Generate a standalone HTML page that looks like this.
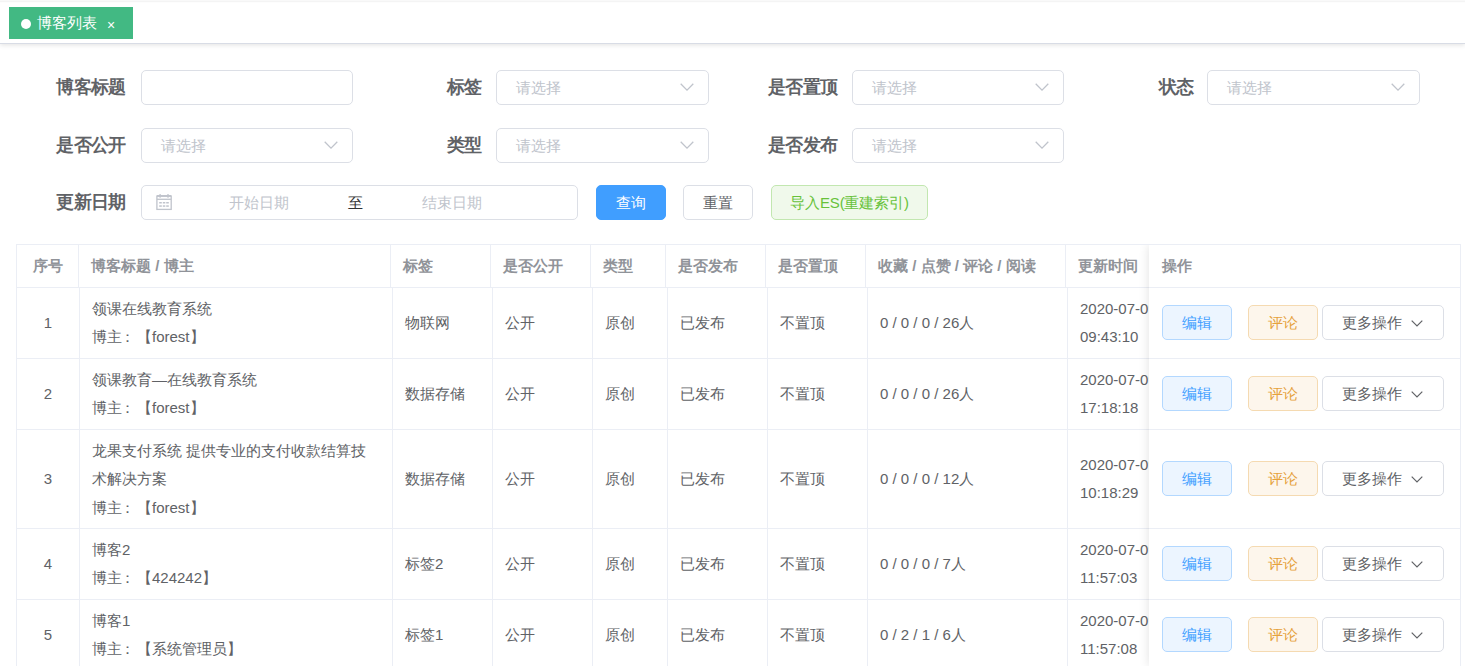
<!DOCTYPE html><html><head><meta charset="utf-8"><style>
*{box-sizing:border-box;margin:0;padding:0}
html,body{width:1465px;height:666px;overflow:hidden;background:#fff}
body{position:relative;font-family:"Liberation Sans",sans-serif;color:#606266}
.a{position:absolute;white-space:nowrap}
.topline{left:0;top:0;width:1465px;height:3px;background:linear-gradient(#f9f9f9 0,#f9f9f9 1px,#f4f4f4 1px,#f4f4f4 2px,#fdfdfd 2px)}
.tagsbar{left:0;top:2px;width:1465px;height:42px;background:#fff;border-bottom:1px solid #d8dce5;box-shadow:0 1px 5px 0 rgba(0,0,0,.12);clip-path:inset(1px 0 -20px 0)}
.tag{left:9px;top:7px;width:124px;height:32px;background:#42b983;color:#fff;font-size:15px;line-height:32px}
.tag .dot{position:absolute;left:12px;top:12px;width:10px;height:10px;border-radius:50%;background:#fff}
.tag .t{position:absolute;left:28px;top:0}
.tag .x{position:absolute;left:98px;top:2px;font-size:14px}
.lbl{font-size:17.5px;letter-spacing:-0.7px;font-weight:bold;color:#606266;line-height:35px;text-align:right}
.inp{height:35px;border:1px solid #dcdfe6;border-radius:5px;background:#fff}
.ph{position:absolute;left:19px;top:0;line-height:33px;font-size:15px;color:#c0c4cc;white-space:nowrap}
.arr{position:absolute;right:14px;top:12px;width:14px;height:8px}
.btn{height:35px;border-radius:5px;font-size:15px;line-height:33px;text-align:center;white-space:nowrap}
.c{font-size:15px;line-height:20px;color:#606266}
.h{font-size:15px;line-height:20px;color:#909399;font-weight:bold}
.vl{position:absolute;width:1px;background:#ebeef5}
.hl{position:absolute;height:1px;background:#ebeef5}
.fixed{left:1149px;top:245px;width:311px;height:421px;background:#fff;box-shadow:0 0 10px rgba(0,0,0,.12);clip-path:inset(0 0 0 -20px)}
</style></head><body>
<div class="a topline"></div><div class="a tagsbar"></div>
<div class="a tag"><span class="dot"></span><span class="t">博客列表</span><span class="x">×</span></div>
<div class="a lbl" style="left:-74.6px;width:200px;top:70px">博客标题</div>
<div class="a lbl" style="left:281.4px;width:200px;top:70px">标签</div>
<div class="a lbl" style="left:637.4px;width:200px;top:70px">是否置顶</div>
<div class="a lbl" style="left:993.4000000000001px;width:200px;top:70px">状态</div>
<div class="a lbl" style="left:-74.6px;width:200px;top:128px">是否公开</div>
<div class="a lbl" style="left:281.4px;width:200px;top:128px">类型</div>
<div class="a lbl" style="left:637.4px;width:200px;top:128px">是否发布</div>
<div class="a lbl" style="left:-74.6px;width:200px;top:185px">更新日期</div>
<div class="a inp" style="left:141px;top:70px;width:212px"></div>
<div class="a inp" style="left:496px;top:70px;width:213px"><span class="ph">请选择</span><svg class="arr" viewBox="0 0 14 8"><path d="M0.7 0.8 L7 7.1 L13.3 0.8" fill="none" stroke="#c0c4cc" stroke-width="1.3"/></svg></div>
<div class="a inp" style="left:852px;top:70px;width:212px"><span class="ph">请选择</span><svg class="arr" viewBox="0 0 14 8"><path d="M0.7 0.8 L7 7.1 L13.3 0.8" fill="none" stroke="#c0c4cc" stroke-width="1.3"/></svg></div>
<div class="a inp" style="left:1207px;top:70px;width:213px"><span class="ph">请选择</span><svg class="arr" viewBox="0 0 14 8"><path d="M0.7 0.8 L7 7.1 L13.3 0.8" fill="none" stroke="#c0c4cc" stroke-width="1.3"/></svg></div>
<div class="a inp" style="left:141px;top:128px;width:212px"><span class="ph">请选择</span><svg class="arr" viewBox="0 0 14 8"><path d="M0.7 0.8 L7 7.1 L13.3 0.8" fill="none" stroke="#c0c4cc" stroke-width="1.3"/></svg></div>
<div class="a inp" style="left:496px;top:128px;width:213px"><span class="ph">请选择</span><svg class="arr" viewBox="0 0 14 8"><path d="M0.7 0.8 L7 7.1 L13.3 0.8" fill="none" stroke="#c0c4cc" stroke-width="1.3"/></svg></div>
<div class="a inp" style="left:852px;top:128px;width:212px"><span class="ph">请选择</span><svg class="arr" viewBox="0 0 14 8"><path d="M0.7 0.8 L7 7.1 L13.3 0.8" fill="none" stroke="#c0c4cc" stroke-width="1.3"/></svg></div>
<div class="a inp" style="left:141px;top:185px;width:437px"><svg class="a" style="left:13px;top:7px" width="18" height="18" viewBox="0 0 18 18"><g stroke="#c0c4cc" fill="none" stroke-width="1.3"><rect x="1.9" y="3.1" width="14.3" height="13.3"/><line x1="1.9" y1="2.9" x2="16.2" y2="2.9" stroke-width="1.8"/><line x1="1.9" y1="6.3" x2="16.2" y2="6.3"/><line x1="5.1" y1="0.9" x2="5.1" y2="4.7"/><line x1="13" y1="0.9" x2="13" y2="4.7"/></g><g fill="#c0c4cc"><rect x="4.2" y="9" width="2.6" height="1.5"/><rect x="7.8" y="9" width="2.5" height="1.5"/><rect x="11.2" y="9" width="2.6" height="1.5"/><rect x="4.2" y="12.3" width="2.6" height="1.5"/><rect x="7.8" y="12.3" width="2.5" height="1.5"/><rect x="11.2" y="12.3" width="2.6" height="1.5"/></g></svg><span class="ph" style="left:87px">开始日期</span><span class="ph" style="left:206px;color:#303133">至</span><span class="ph" style="left:280px">结束日期</span></div>
<div class="a btn" style="left:596px;top:185px;width:70px;background:#409eff;border:1px solid #409eff;color:#fff">查询</div>
<div class="a btn" style="left:683px;top:185px;width:70px;background:#fff;border:1px solid #dcdfe6;color:#606266">重置</div>
<div class="a btn" style="left:771px;top:185px;width:157px;background:#f0f9eb;border:1px solid #c2e7b0;color:#67c23a;letter-spacing:-0.15px">导入ES(重建索引)</div>
<div class="hl" style="left:16px;top:244px;width:1445px"></div>
<div class="vl" style="left:16px;top:244px;height:422px"></div>
<div class="hl" style="left:16px;top:287px;width:1445px"></div>
<div class="hl" style="left:16px;top:358px;width:1445px"></div>
<div class="hl" style="left:16px;top:429px;width:1445px"></div>
<div class="hl" style="left:16px;top:528px;width:1445px"></div>
<div class="hl" style="left:16px;top:599px;width:1445px"></div>
<div class="hl" style="left:16px;top:670px;width:1445px"></div>
<div class="vl" style="left:78px;top:244px;height:43px"></div>
<div class="vl" style="left:390px;top:244px;height:43px"></div>
<div class="vl" style="left:490px;top:244px;height:43px"></div>
<div class="vl" style="left:590px;top:244px;height:43px"></div>
<div class="vl" style="left:665px;top:244px;height:43px"></div>
<div class="vl" style="left:765px;top:244px;height:43px"></div>
<div class="vl" style="left:865px;top:244px;height:43px"></div>
<div class="vl" style="left:1065px;top:244px;height:43px"></div>
<div class="vl" style="left:79px;top:287px;height:379px"></div>
<div class="vl" style="left:392px;top:287px;height:379px"></div>
<div class="vl" style="left:492px;top:287px;height:379px"></div>
<div class="vl" style="left:592px;top:287px;height:379px"></div>
<div class="vl" style="left:667px;top:287px;height:379px"></div>
<div class="vl" style="left:767px;top:287px;height:379px"></div>
<div class="vl" style="left:867px;top:287px;height:379px"></div>
<div class="vl" style="left:1067px;top:287px;height:379px"></div>
<div class="a h" style="left:17px;width:62px;text-align:center;top:256.0px">序号</div>
<div class="a h" style="left:91.0px;top:256.0px">博客标题 / 博主</div>
<div class="a h" style="left:403.0px;top:256.0px">标签</div>
<div class="a h" style="left:503.0px;top:256.0px">是否公开</div>
<div class="a h" style="left:603.0px;top:256.0px">类型</div>
<div class="a h" style="left:678.0px;top:256.0px">是否发布</div>
<div class="a h" style="left:778.0px;top:256.0px">是否置顶</div>
<div class="a h" style="left:878.0px;top:256.0px">收藏 / 点赞 / 评论 / 阅读</div>
<div class="a h" style="left:1078.0px;top:256.0px">更新时间</div>
<div class="a c" style="left:17px;width:62px;text-align:center;top:313.0px">1</div>
<div class="a c" style="left:92.0px;top:298.75px">领课在线教育系统</div>
<div class="a c" style="left:92.0px;top:327.25px">博主<span style="position:relative;left:-2.5px">：</span>【forest】</div>
<div class="a c" style="left:405.0px;top:313.0px">物联网</div>
<div class="a c" style="left:505.0px;top:313.0px">公开</div>
<div class="a c" style="left:605.0px;top:313.0px">原创</div>
<div class="a c" style="left:680.0px;top:313.0px">已发布</div>
<div class="a c" style="left:780.0px;top:313.0px">不置顶</div>
<div class="a c" style="left:880.0px;top:313.0px">0 / 0 / 0 / 26人</div>
<div class="a c" style="left:1080.0px;top:298.75px">2020-07-09</div>
<div class="a c" style="left:1080.0px;top:327.25px">09:43:10</div>
<div class="a c" style="left:17px;width:62px;text-align:center;top:384.0px">2</div>
<div class="a c" style="left:92.0px;top:369.75px">领课教育—在线教育系统</div>
<div class="a c" style="left:92.0px;top:398.25px">博主<span style="position:relative;left:-2.5px">：</span>【forest】</div>
<div class="a c" style="left:405.0px;top:384.0px">数据存储</div>
<div class="a c" style="left:505.0px;top:384.0px">公开</div>
<div class="a c" style="left:605.0px;top:384.0px">原创</div>
<div class="a c" style="left:680.0px;top:384.0px">已发布</div>
<div class="a c" style="left:780.0px;top:384.0px">不置顶</div>
<div class="a c" style="left:880.0px;top:384.0px">0 / 0 / 0 / 26人</div>
<div class="a c" style="left:1080.0px;top:369.75px">2020-07-09</div>
<div class="a c" style="left:1080.0px;top:398.25px">17:18:18</div>
<div class="a c" style="left:17px;width:62px;text-align:center;top:469.0px">3</div>
<div class="a c" style="left:92.0px;top:440.5px">龙果支付系统 提供专业的支付收款结算技</div>
<div class="a c" style="left:92.0px;top:469.0px">术解决方案</div>
<div class="a c" style="left:92.0px;top:497.5px">博主<span style="position:relative;left:-2.5px">：</span>【forest】</div>
<div class="a c" style="left:405.0px;top:469.0px">数据存储</div>
<div class="a c" style="left:505.0px;top:469.0px">公开</div>
<div class="a c" style="left:605.0px;top:469.0px">原创</div>
<div class="a c" style="left:680.0px;top:469.0px">已发布</div>
<div class="a c" style="left:780.0px;top:469.0px">不置顶</div>
<div class="a c" style="left:880.0px;top:469.0px">0 / 0 / 0 / 12人</div>
<div class="a c" style="left:1080.0px;top:454.75px">2020-07-09</div>
<div class="a c" style="left:1080.0px;top:483.25px">10:18:29</div>
<div class="a c" style="left:17px;width:62px;text-align:center;top:554.0px">4</div>
<div class="a c" style="left:92.0px;top:539.75px">博客2</div>
<div class="a c" style="left:92.0px;top:568.25px">博主<span style="position:relative;left:-2.5px">：</span>【424242】</div>
<div class="a c" style="left:405.0px;top:554.0px">标签2</div>
<div class="a c" style="left:505.0px;top:554.0px">公开</div>
<div class="a c" style="left:605.0px;top:554.0px">原创</div>
<div class="a c" style="left:680.0px;top:554.0px">已发布</div>
<div class="a c" style="left:780.0px;top:554.0px">不置顶</div>
<div class="a c" style="left:880.0px;top:554.0px">0 / 0 / 0 / 7人</div>
<div class="a c" style="left:1080.0px;top:539.75px">2020-07-09</div>
<div class="a c" style="left:1080.0px;top:568.25px">11:57:03</div>
<div class="a c" style="left:17px;width:62px;text-align:center;top:625.0px">5</div>
<div class="a c" style="left:92.0px;top:610.75px">博客1</div>
<div class="a c" style="left:92.0px;top:639.25px">博主<span style="position:relative;left:-2.5px">：</span>【系统管理员】</div>
<div class="a c" style="left:405.0px;top:625.0px">标签1</div>
<div class="a c" style="left:505.0px;top:625.0px">公开</div>
<div class="a c" style="left:605.0px;top:625.0px">原创</div>
<div class="a c" style="left:680.0px;top:625.0px">已发布</div>
<div class="a c" style="left:780.0px;top:625.0px">不置顶</div>
<div class="a c" style="left:880.0px;top:625.0px">0 / 2 / 1 / 6人</div>
<div class="a c" style="left:1080.0px;top:610.75px">2020-07-09</div>
<div class="a c" style="left:1080.0px;top:639.25px">11:57:08</div>
<div class="a fixed"></div>
<div class="hl" style="left:1149px;top:287px;width:312px"></div>
<div class="hl" style="left:1149px;top:358px;width:312px"></div>
<div class="hl" style="left:1149px;top:429px;width:312px"></div>
<div class="hl" style="left:1149px;top:528px;width:312px"></div>
<div class="hl" style="left:1149px;top:599px;width:312px"></div>
<div class="hl" style="left:1149px;top:670px;width:312px"></div>
<div class="vl" style="left:1460px;top:244px;height:422px"></div>
<div class="hl" style="left:1149px;top:244px;width:312px"></div>
<div class="a h" style="left:1162px;top:256.0px">操作</div>
<div class="a btn" style="left:1162px;top:305.0px;width:70px;background:#ecf5ff;border:1px solid #b3d8ff;color:#409eff">编辑</div>
<div class="a btn" style="left:1248px;top:305.0px;width:70px;background:#fdf6ec;border:1px solid #f5dab1;color:#e6a23c">评论</div>
<div class="a btn" style="left:1322px;top:305.0px;width:122px;background:#fff;border:1px solid #dcdfe6;color:#606266;text-align:left"><span class="a" style="left:19px;top:0">更多操作</span><svg class="a" style="left:87.5px;top:14px" width="12" height="7" viewBox="0 0 12 7"><path d="M0.7 0.7 L6 6 L11.3 0.7" fill="none" stroke="#606266" stroke-width="1.2"/></svg></div>
<div class="a btn" style="left:1162px;top:376.0px;width:70px;background:#ecf5ff;border:1px solid #b3d8ff;color:#409eff">编辑</div>
<div class="a btn" style="left:1248px;top:376.0px;width:70px;background:#fdf6ec;border:1px solid #f5dab1;color:#e6a23c">评论</div>
<div class="a btn" style="left:1322px;top:376.0px;width:122px;background:#fff;border:1px solid #dcdfe6;color:#606266;text-align:left"><span class="a" style="left:19px;top:0">更多操作</span><svg class="a" style="left:87.5px;top:14px" width="12" height="7" viewBox="0 0 12 7"><path d="M0.7 0.7 L6 6 L11.3 0.7" fill="none" stroke="#606266" stroke-width="1.2"/></svg></div>
<div class="a btn" style="left:1162px;top:461.0px;width:70px;background:#ecf5ff;border:1px solid #b3d8ff;color:#409eff">编辑</div>
<div class="a btn" style="left:1248px;top:461.0px;width:70px;background:#fdf6ec;border:1px solid #f5dab1;color:#e6a23c">评论</div>
<div class="a btn" style="left:1322px;top:461.0px;width:122px;background:#fff;border:1px solid #dcdfe6;color:#606266;text-align:left"><span class="a" style="left:19px;top:0">更多操作</span><svg class="a" style="left:87.5px;top:14px" width="12" height="7" viewBox="0 0 12 7"><path d="M0.7 0.7 L6 6 L11.3 0.7" fill="none" stroke="#606266" stroke-width="1.2"/></svg></div>
<div class="a btn" style="left:1162px;top:546.0px;width:70px;background:#ecf5ff;border:1px solid #b3d8ff;color:#409eff">编辑</div>
<div class="a btn" style="left:1248px;top:546.0px;width:70px;background:#fdf6ec;border:1px solid #f5dab1;color:#e6a23c">评论</div>
<div class="a btn" style="left:1322px;top:546.0px;width:122px;background:#fff;border:1px solid #dcdfe6;color:#606266;text-align:left"><span class="a" style="left:19px;top:0">更多操作</span><svg class="a" style="left:87.5px;top:14px" width="12" height="7" viewBox="0 0 12 7"><path d="M0.7 0.7 L6 6 L11.3 0.7" fill="none" stroke="#606266" stroke-width="1.2"/></svg></div>
<div class="a btn" style="left:1162px;top:617.0px;width:70px;background:#ecf5ff;border:1px solid #b3d8ff;color:#409eff">编辑</div>
<div class="a btn" style="left:1248px;top:617.0px;width:70px;background:#fdf6ec;border:1px solid #f5dab1;color:#e6a23c">评论</div>
<div class="a btn" style="left:1322px;top:617.0px;width:122px;background:#fff;border:1px solid #dcdfe6;color:#606266;text-align:left"><span class="a" style="left:19px;top:0">更多操作</span><svg class="a" style="left:87.5px;top:14px" width="12" height="7" viewBox="0 0 12 7"><path d="M0.7 0.7 L6 6 L11.3 0.7" fill="none" stroke="#606266" stroke-width="1.2"/></svg></div>
</body></html>
